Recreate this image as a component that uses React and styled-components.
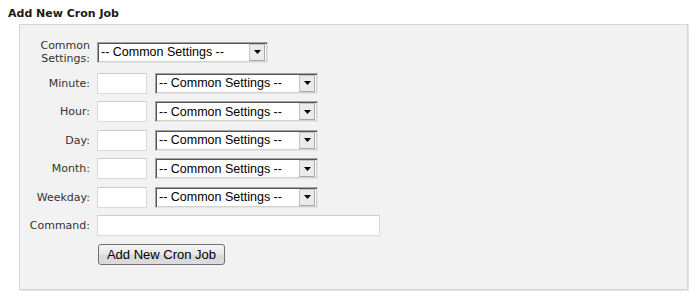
import React from "react";
import styled, { createGlobalStyle } from "styled-components";

const Global = createGlobalStyle`
  html, body { margin: 0; padding: 0; background: #ffffff; }
  body { font-family: "DejaVu Sans", Verdana, sans-serif; }
`;

const Page = styled.div`
  padding: 7px 8px 8px 8px;
`;

const Title = styled.h2`
  margin: 0 0 4px 0;
  font-family: "DejaVu Sans", Verdana, sans-serif;
  font-size: 11px;
  line-height: 13px;
  font-weight: bold;
  color: #1a1a1a;
`;

const Panel = styled.div`
  margin-left: 11px;
  width: 669px;
  background: #f2f2f2;
  border: 1px solid #d6d6d6;
  box-shadow: 1px 1px 0 #e2e2e2;
  padding: 14px 10px 24px 10px;
  box-sizing: border-box;
`;

const FormGrid = styled.div`
  display: grid;
  grid-template-columns: 60px auto;
  column-gap: 7px;
  row-gap: 7.5px;
  align-items: center;
  justify-items: start;
`;

const Label = styled.label`
  justify-self: end;
  text-align: right;
  font-family: "DejaVu Sans", Verdana, sans-serif;
  font-size: 11px;
  line-height: 13px;
  color: #333333;
`;

const Controls = styled.div`
  display: flex;
  align-items: center;
  gap: 8px;
`;

const TextInput = styled.input`
  box-sizing: border-box;
  width: ${(p) => p.$w}px;
  height: 21px;
  margin: 0;
  padding: 1px 3px;
  border: 1px solid #dadada;
  border-top-color: #cdcdcd;
  background: #ffffff;
  font-family: "Liberation Sans", Arial, sans-serif;
  font-size: 12.5px;
  outline: none;
`;

const SelectBox = styled.div`
  box-sizing: border-box;
  display: flex;
  align-items: stretch;
  width: ${(p) => p.$w}px;
  height: 21px;
  padding: 1px;
  background: #ffffff;
  border: 1px solid;
  border-color: #a3a3a3 #e4e4e4 #e4e4e4 #a3a3a3;
  box-shadow: inset 1px 1px 0 #555555, inset -1px -1px 0 #d2d2d2;
`;

const NativeSelect = styled.select`
  flex: 1;
  min-width: 0;
  appearance: none;
  -webkit-appearance: none;
  border: none;
  outline: none;
  margin: 0;
  padding: 0 0 0 2px;
  background: #ffffff;
  font-family: "Liberation Sans", Arial, sans-serif;
  font-size: 12.5px;
  color: #000000;
`;

const ArrowButton = styled.span`
  box-sizing: border-box;
  width: 16px;
  display: flex;
  align-items: center;
  justify-content: center;
  background: #ebebeb;
  border: 1px solid #a8a8a8;
  border-top-color: #c4c4c4;
  border-left-color: #c4c4c4;
  margin: 0 1px 0 0;
`;

const Button = styled.button`
  box-sizing: border-box;
  margin: 0 0 0 1px;
  width: 127px;
  height: 21px;
  padding: 0;
  border: 1px solid #707070;
  border-radius: 3px;
  background: linear-gradient(#f6f6f6, #e6e6e6 50%, #d8d8d8 51%, #dcdcdc);
  font-family: "Liberation Sans", Arial, sans-serif;
  font-size: 13px;
  color: #000000;
`;

const Spacer = styled.span``;

function Arrow() {
  return (
    <svg width="7" height="4" viewBox="0 0 7 4">
      <path d="M0 0 H7 L3.5 4 Z" fill="#000" />
    </svg>
  );
}

function Select({ w }) {
  return (
    <SelectBox $w={w}>
      <NativeSelect defaultValue="">
        <option value="">-- Common Settings --</option>
      </NativeSelect>
      <ArrowButton>
        <Arrow />
      </ArrowButton>
    </SelectBox>
  );
}

const fields = ["Minute", "Hour", "Day", "Month", "Weekday"];

export default function App() {
  return (
    <>
      <Global />
      <Page>
        <Title>Add New Cron Job</Title>
        <Panel>
          <FormGrid>
            <Label>Common Settings:</Label>
            <Select w={171} />
            {fields.map((f) => (
              <React.Fragment key={f}>
                <Label>{f}:</Label>
                <Controls>
                  <TextInput $w={50} />
                  <Select w={163} />
                </Controls>
              </React.Fragment>
            ))}
            <Label>Command:</Label>
            <TextInput $w={283} />
            <Spacer />
            <Button>Add New Cron Job</Button>
          </FormGrid>
        </Panel>
      </Page>
    </>
  );
}
